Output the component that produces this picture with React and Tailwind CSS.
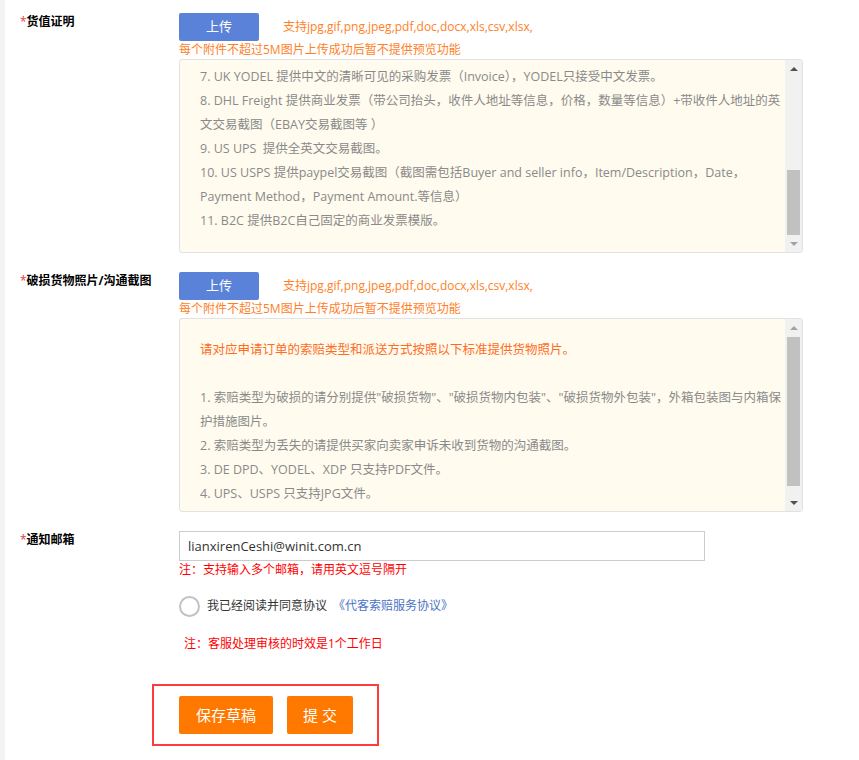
import React from 'react';

const FONT = "font-['Open_Sans','Noto_Sans_CJK_SC',sans-serif]";

const SUPPORT = '支持jpg,gif,png,jpeg,pdf,doc,docx,xls,csv,xlsx,';
const LIMIT = '每个附件不超过5M图片上传成功后暂不提供预览功能';

const invoiceLines = [
  '7. UK YODEL 提供中文的清晰可见的采购发票（Invoice），YODEL只接受中文发票。',
  '8. DHL Freight 提供商业发票（带公司抬头，收件人地址等信息，价格，数量等信息）+带收件人地址的英',
  '文交易截图（EBAY交易截图等 ）',
  '9. US UPS  提供全英文交易截图。',
  '10. US USPS 提供paypel交易截图（截图需包括Buyer and seller info，Item/Description，Date，',
  'Payment Method，Payment Amount.等信息）',
  '11. B2C 提供B2C自己固定的商业发票模版。',
];

const photoLines = [
  '1. 索赔类型为破损的请分别提供"破损货物"、"破损货物内包装"、"破损货物外包装"，外箱包装图与内箱保',
  '护措施图片。',
  '2. 索赔类型为丢失的请提供买家向卖家申诉未收到货物的沟通截图。',
  '3. DE DPD、YODEL、XDP 只支持PDF文件。',
  '4. UPS、USPS 只支持JPG文件。',
];

const UpArrow = ({ on }) => (
  <div
    className={
      on
        ? 'w-0 h-0 border-x-[4px] border-x-transparent border-b-[4px] border-b-[#505050]'
        : 'w-0 h-0 border-x-[4px] border-x-transparent border-b-[4px] border-b-[#a3a3a3]'
    }
  />
);

const DownArrow = ({ on }) => (
  <div
    className={
      on
        ? 'w-0 h-0 border-x-[4px] border-x-transparent border-t-[4px] border-t-[#505050]'
        : 'w-0 h-0 border-x-[4px] border-x-transparent border-t-[4px] border-t-[#a3a3a3]'
    }
  />
);

// 假的滚动条（截图里是系统滚动条）
const ScrollBar = ({ thumbClass, upOn, downOn }) => (
  <div className="w-[17px] shrink-0 bg-[#f1f1f1] flex flex-col">
    <div className="h-[17px] flex items-center justify-center">
      <UpArrow on={upOn} />
    </div>
    <div className="flex-1 px-[2px]">
      <div className={thumbClass} />
    </div>
    <div className="h-[17px] flex items-center justify-center">
      <DownArrow on={downOn} />
    </div>
  </div>
);

const Label = ({ children }) => (
  <div className="w-[174px] shrink-0 pl-[15px] text-[12px] leading-[18px] font-bold text-black">
    <span className="text-[#e4393c] font-normal">*</span>
    {children}
  </div>
);

const UploadRow = () => (
  <>
    <div className="flex items-center h-[28px]">
      <button className="w-[80px] h-[28px] rounded-[2px] bg-[#5a82d8] text-white text-[13px]">
        上传
      </button>
      <span className="ml-[24px] text-[12px] text-[#ff7f27]">{SUPPORT}</span>
    </div>
    <div className="h-[18px] leading-[18px] text-[12px] text-[#ff7f27]">{LIMIT}</div>
  </>
);

const App = () => {
  return (
    <div className={`flex min-h-[760px] bg-white ${FONT}`}>
      <div className="w-[5px] shrink-0 bg-[#f3f3f3]" />

      <div className="flex-1 pt-[13px]">
        {/* 货值证明 */}
        <div className="flex">
          <Label>货值证明</Label>
          <div>
            <UploadRow />
            <div className="w-[624px] h-[194px] flex border border-[#e2e2e2] rounded-[3px] bg-[#fffbee] overflow-hidden">
              <div className="flex-1 pt-[5px] pl-[20px] overflow-hidden text-[12.5px] leading-[24px] text-[#8a8a8a]">
                {invoiceLines.map((line, i) => (
                  <div key={i} className="whitespace-pre">{line}</div>
                ))}
              </div>
              <ScrollBar thumbClass="mt-[93px] h-[65px] bg-[#c1c1c1]" upOn downOn={false} />
            </div>
          </div>
        </div>

        {/* 破损货物照片 */}
        <div className="flex mt-[19px]">
          <Label>破损货物照片/沟通截图</Label>
          <div>
            <UploadRow />
            <div className="w-[624px] h-[194px] flex border border-[#e2e2e2] rounded-[3px] bg-[#fffbee] overflow-hidden">
              <div className="flex-1 pt-[19px] pl-[20px] overflow-hidden text-[12.5px] leading-[24px] text-[#8a8a8a]">
                <div className="text-[#ff6c1f]">请对应申请订单的索赔类型和派送方式按照以下标准提供货物照片。</div>
                <div className="h-[24px]" />
                {photoLines.map((line, i) => (
                  <div key={i} className="whitespace-pre">{line}</div>
                ))}
              </div>
              <ScrollBar thumbClass="mt-[1px] h-[149px] bg-[#c1c1c1]" upOn={false} downOn />
            </div>
          </div>
        </div>

        {/* 通知邮箱 */}
        <div className="flex mt-[19px]">
          <Label>通知邮箱</Label>
          <div>
            <input
              type="text"
              defaultValue="lianxirenCeshi@winit.com.cn"
              className="w-[526px] h-[30px] border border-[#cccccc] px-[8px] text-[13px] text-[#333333] outline-none"
            />
            <div className="h-[18px] leading-[18px] text-[12px] text-[#ff0000]">
              注：支持输入多个邮箱，请用英文逗号隔开
            </div>

            <div className="mt-[16px] flex items-center h-[22px]">
              <span className="w-[21px] h-[21px] rounded-full border-2 border-[#c2c2c2] bg-white" />
              <span className="ml-[7px] text-[12px] text-[#333333]">我已经阅读并同意协议</span>
              <a className="ml-[6px] text-[12px] text-[#4a72c4]">《代客索赔服务协议》</a>
            </div>

            <div className="mt-[18px] pl-[5px] h-[18px] leading-[18px] text-[12px] text-[#ff0000]">
              注：客服处理审核的时效是1个工作日
            </div>
          </div>
        </div>

        {/* 操作按钮 */}
        <div className="mt-[31px] ml-[147px] w-[227px] h-[62px] border-2 border-[#ff3b3b] flex items-center pl-[25px] gap-[14px]">
          <button className="w-[94px] h-[38px] rounded-[2px] bg-[#ff7800] text-white text-[15px]">
            保存草稿
          </button>
          <button className="w-[66px] h-[38px] rounded-[2px] bg-[#ff7800] text-white text-[15px]">
            提 交
          </button>
        </div>
      </div>
    </div>
  );
};

export default App;
